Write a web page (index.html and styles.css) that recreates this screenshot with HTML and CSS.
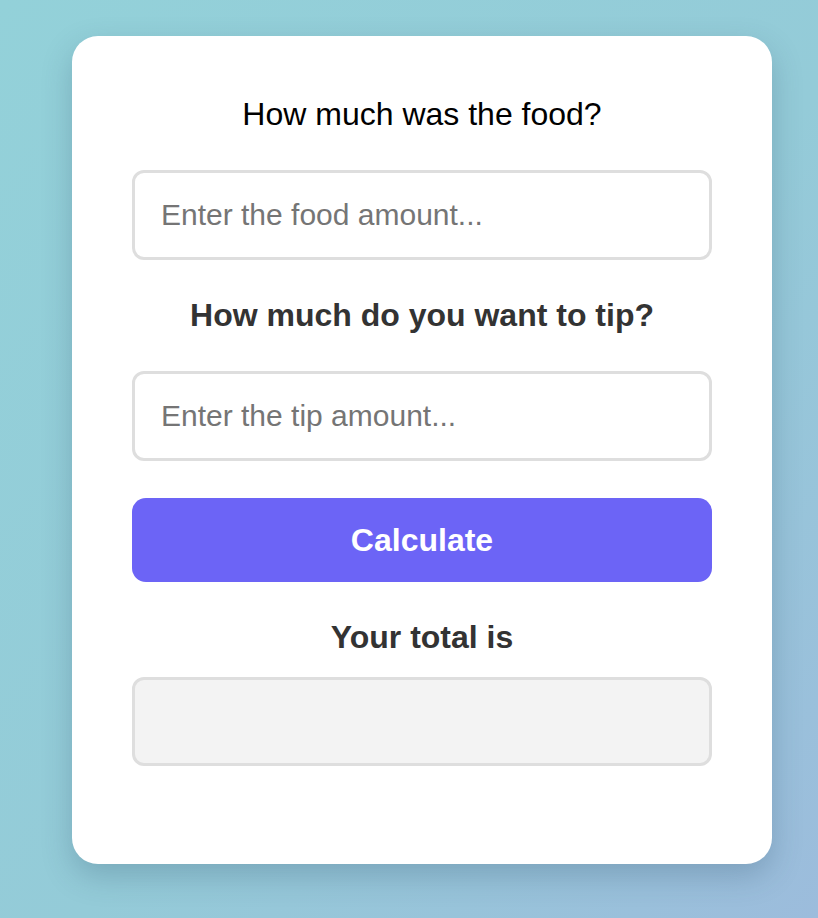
FILE: index.html
```html
<!DOCTYPE html>
<html lang="en">
<head>
    <meta charset="UTF-8">
    <meta name="viewport" content="width=device-width, initial-scale=1.0">
    <title>Tip Calculator</title>
    <link rel="stylesheet" href="styles.css">
</head>
<body>
    <div class="calculadora">
        <label class="titulo titulo-normal" for="food">How much was the food?</label>
        <input class="captura" id="food" name="food" type="number" placeholder="Enter the food amount...">

        <label class="titulo" for="tip">How much do you want to tip?</label>
        <input class="captura" id="tip" name="tip" type="number" placeholder="Enter the tip amount...">

        <button class="btn-calcular" id="btncalcular" onclick="calcular();">Calculate</button>

        <div class="resultado">
            <h2 class="titulo">Your total is</h2>
            <div class="total" id="total"></div>
        </div>
    </div>

    <script>
        function calcular() {
            const food = parseFloat(document.getElementById('food').value) || 0;
            const tip = parseFloat(document.getElementById('tip').value) || 0;
            document.getElementById('total').textContent = (food + tip).toFixed(2);
        }
    </script>
</body>
</html>
```

FILE: styles.css
```css
/* Estilos globales */
* {
    box-sizing: border-box;
    margin: 0;
    padding: 0;
}

html, body {
    height: 100%;
}

body {
    font-family: "Liberation Sans", Arial, sans-serif;
    background: linear-gradient(to bottom right, #93d1d9 0%, #94cbd8 55%, #9cbcdc 100%);
    color: #333;
    padding: 36px 46px 0 72px;
}

/* Tarjeta */
.calculadora {
    width: 700px;
    background-color: #fff;
    border-radius: 26px;
    padding: 60px 60px 98px;
    box-shadow: 0 12px 30px rgba(40, 70, 100, 0.25);
    display: flex;
    flex-direction: column;
    gap: 37px;
}

.titulo {
    display: block;
    font-size: 32px;
    line-height: 37px;
    font-weight: bold;
    color: #333;
    text-align: center;
}

.titulo-normal {
    font-weight: normal;
    color: #000;
}

.captura, .total {
    width: 100%;
    height: 90px;
    border: 3px solid #dedede;
    border-radius: 12px;
    font-family: inherit;
}

.captura {
    padding: 0 26px;
    font-size: 30px;
    color: #333;
    background-color: #fff;
    outline: none;
    -moz-appearance: textfield;
}

.captura::placeholder {
    color: #757575;
}

.captura::-webkit-outer-spin-button,
.captura::-webkit-inner-spin-button {
    -webkit-appearance: none;
    margin: 0;
}

/* Botón */
.btn-calcular {
    height: 84px;
    border: none;
    border-radius: 14px;
    background-color: #6c64f6;
    color: #fff;
    font-family: inherit;
    font-size: 32px;
    font-weight: bold;
    cursor: pointer;
}

.btn-calcular:hover {
    background-color: #5a52e8;
}

/* Resultado */
.resultado {
    display: flex;
    flex-direction: column;
    gap: 21px;
}

.total {
    height: 89px;
    background-color: #f3f3f3;
    font-size: 30px;
    font-weight: bold;
    display: flex;
    align-items: center;
    justify-content: center;
}
```
